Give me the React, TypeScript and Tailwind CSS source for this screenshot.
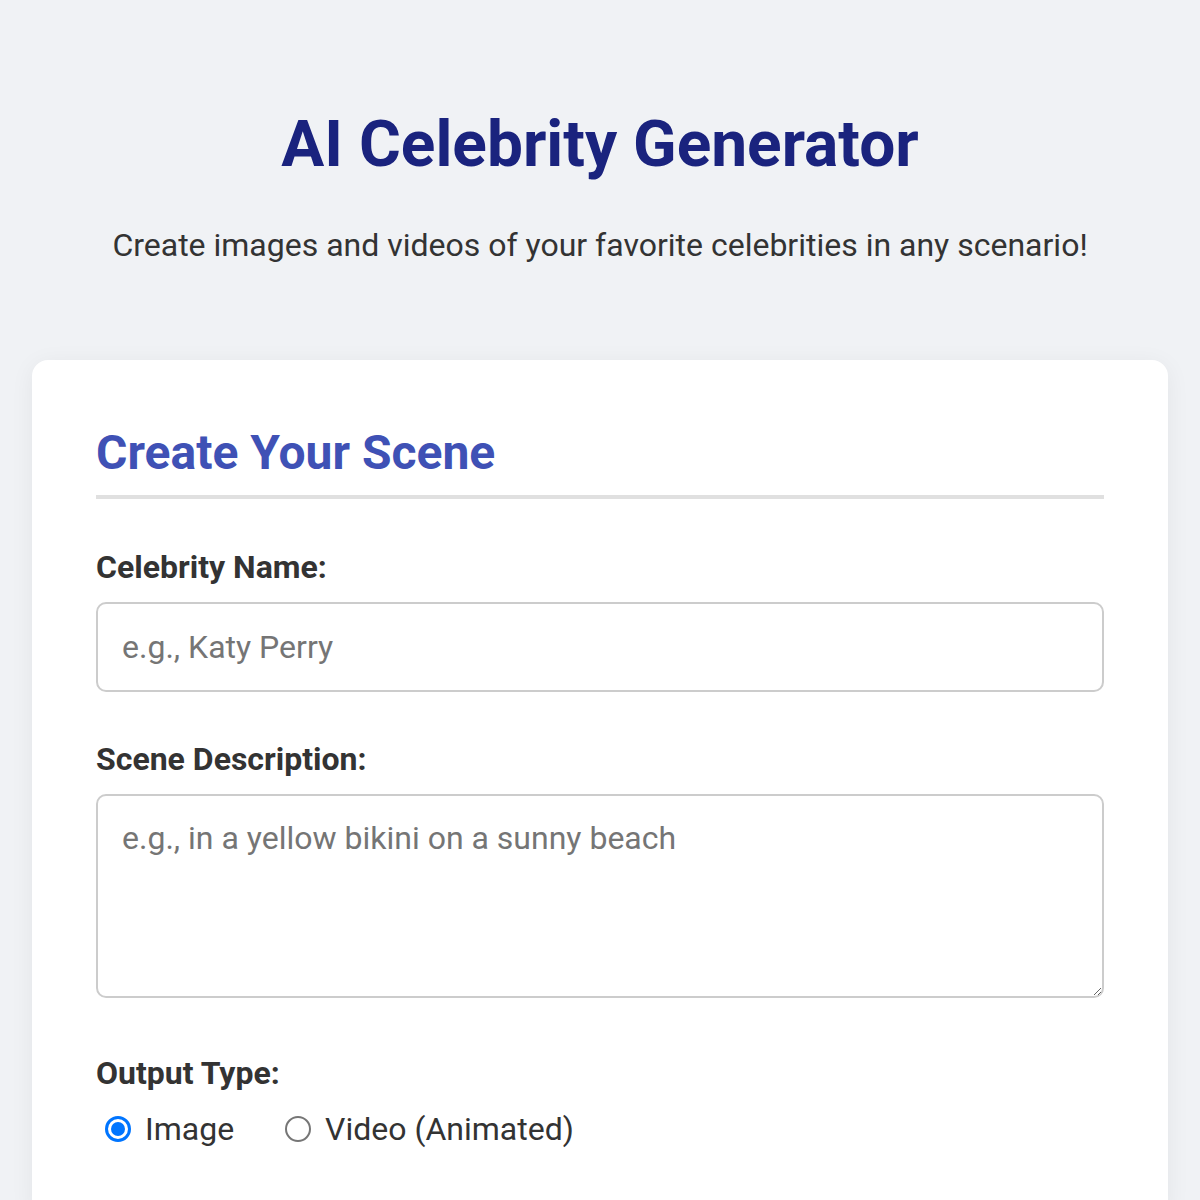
import React, { useState } from 'react';

const Radio = ({ checked, label, onSelect }: { checked: boolean; label: string; onSelect: () => void }) => (
  <label className="flex items-center cursor-pointer" onClick={onSelect}>
    {checked ? (
      <span className="w-[26px] h-[26px] rounded-full border-[3px] border-[#0075ff] bg-white flex items-center justify-center">
        <span className="w-[14px] h-[14px] rounded-full bg-[#0075ff]" />
      </span>
    ) : (
      <span className="w-[26px] h-[26px] rounded-full border-2 border-[#767676] bg-white" />
    )}
    <span className="ml-[14px]">{label}</span>
  </label>
);

export default function App() {
  const [output, setOutput] = useState<'image' | 'video'>('image');

  return (
    <div className="min-h-screen bg-[#f0f2f5] px-8 pt-[107px] pb-16 font-['Roboto',sans-serif]">
      {/* Header */}
      <h1 className="text-center text-[64px] leading-[1.2] font-bold text-[#1a237e]">AI Celebrity Generator</h1>
      <p className="mt-[37px] text-center text-[32px] leading-[1.5] text-[#333]">
        Create images and videos of your favorite celebrities in any scenario!
      </p>

      {/* Form card */}
      <div className="mt-[91px] bg-white rounded-2xl shadow-[0_4px_24px_rgba(0,0,0,0.06)] px-16 pt-16 pb-16">
        <h2 className="text-[48px] leading-[1.2] font-bold text-[#3f51b5] pb-[14px] border-b-4 border-[#e0e0e0]">
          Create Your Scene
        </h2>

        <div className="mt-[44px]">
          <label className="block text-[32px] leading-[1.5] font-bold text-[#333]">Celebrity Name:</label>
          <input
            type="text"
            placeholder="e.g., Katy Perry"
            className="mt-[11px] block w-full h-[90px] px-6 border-2 border-[#ccc] rounded-[10px] text-[32px] text-[#333] placeholder:text-[#757575] outline-none"
          />
        </div>

        <div className="mt-[43px]">
          <label className="block text-[32px] leading-[1.5] font-bold text-[#333]">Scene Description:</label>
          <textarea
            placeholder="e.g., in a yellow bikini on a sunny beach"
            className="mt-[11px] block w-full h-[204px] p-6 border-2 border-[#ccc] rounded-[10px] text-[32px] leading-[1.17] text-[#333] placeholder:text-[#757575] outline-none resize-y"
          />
        </div>

        <div className="mt-[51px]">
          <label className="block text-[32px] leading-[1.5] font-bold text-[#333]">Output Type:</label>
          <div className="mt-[8px] flex items-center gap-[51px] pl-[9px] text-[32px] leading-[1.5] text-[#333]">
            <Radio checked={output === 'image'} label="Image" onSelect={() => setOutput('image')} />
            <Radio checked={output === 'video'} label="Video (Animated)" onSelect={() => setOutput('video')} />
          </div>
        </div>
      </div>
    </div>
  );
}
